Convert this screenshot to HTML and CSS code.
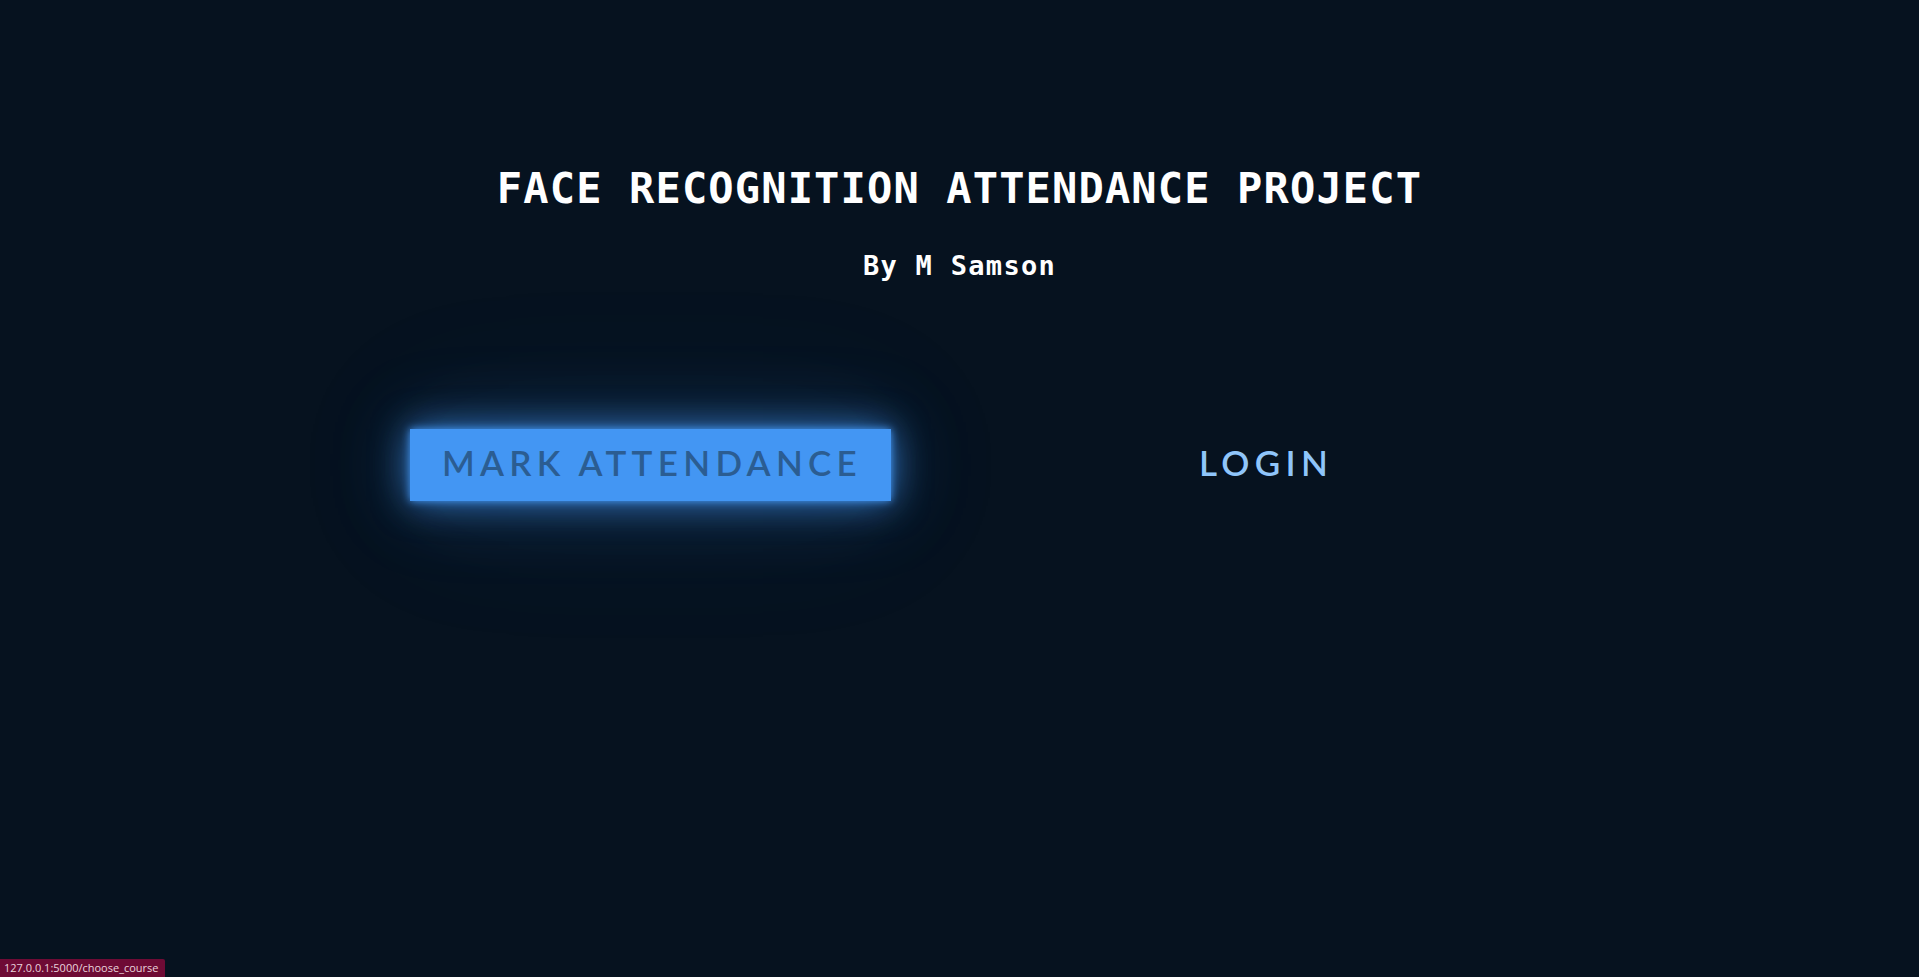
FILE: index.html
```html
<!DOCTYPE html>
<html lang="en">
<head>
<meta charset="utf-8">
<title>Face Recognition Attendance Project</title>
<link rel="stylesheet" href="styles.css">
</head>
<body>
<main class="page">
  <header class="hero">
    <h1 class="title">FACE RECOGNITION ATTENDANCE PROJECT</h1>
    <h2 class="subtitle">By M Samson</h2>
  </header>
  <nav class="actions">
    <div class="cell"><a class="btn btn-glow" href="#">MARK ATTENDANCE</a></div>
    <div class="cell"><a class="btn btn-plain" href="#">LOGIN</a></div>
  </nav>
</main>
<div class="status">127.0.0.1:5000/choose_course</div>
</body>
</html>
```
FILE: styles.css
```css
html, body {
  margin: 0;
  padding: 0;
  height: 100%;
}
body {
  background: #06121f;
  color: #ffffff;
  overflow: hidden;
}
.page {
  display: flex;
  flex-direction: column;
  align-items: center;
  padding-top: 164px;
}
.hero {
  display: flex;
  flex-direction: column;
  align-items: center;
}
.title {
  margin: 0;
  font-family: "DejaVu Sans Mono", "Liberation Mono", monospace;
  font-weight: bold;
  font-size: 42px;
  line-height: 50px;
  letter-spacing: 1.15px;
  color: #ffffff;
  white-space: nowrap;
}
.subtitle {
  margin: 36px 0 0;
  font-family: "DejaVu Sans Mono", "Liberation Mono", monospace;
  font-weight: bold;
  font-size: 27px;
  line-height: 32px;
  letter-spacing: 1.3px;
  color: #ffffff;
}
.actions {
  margin-top: 147px;
  display: grid;
  grid-template-columns: 614px 614px;
  padding-right: 4px;
}
.cell {
  display: flex;
  justify-content: center;
}
.btn {
  display: block;
  line-height: 67px;
  padding: 0 29px 5px 32px;
  font-family: Lato, "Open Sans", sans-serif;
  font-weight: 600;
  font-size: 35px;
  letter-spacing: 5.3px;
  text-decoration: none;
  white-space: nowrap;
}
.btn-glow {
  background: #4396f3;
  color: #2b5d92;
  box-shadow:
    0 0 8px #4396f3,
    0 0 36px rgba(67, 150, 243, 0.75),
    0 0 80px rgba(67, 150, 243, 0.3),
    0 0 160px rgba(67, 150, 243, 0.1);
}
.btn-plain {
  background: transparent;
  color: #8fc5fa;
}
.status {
  position: fixed;
  left: 0;
  bottom: 0;
  height: 18px;
  line-height: 18px;
  padding: 0 6px 0 4px;
  background: #6e0b35;
  color: #e9d4dc;
  font-family: "Open Sans", "Liberation Sans", sans-serif;
  font-size: 11px;
  border-top-right-radius: 2px;
}
```
